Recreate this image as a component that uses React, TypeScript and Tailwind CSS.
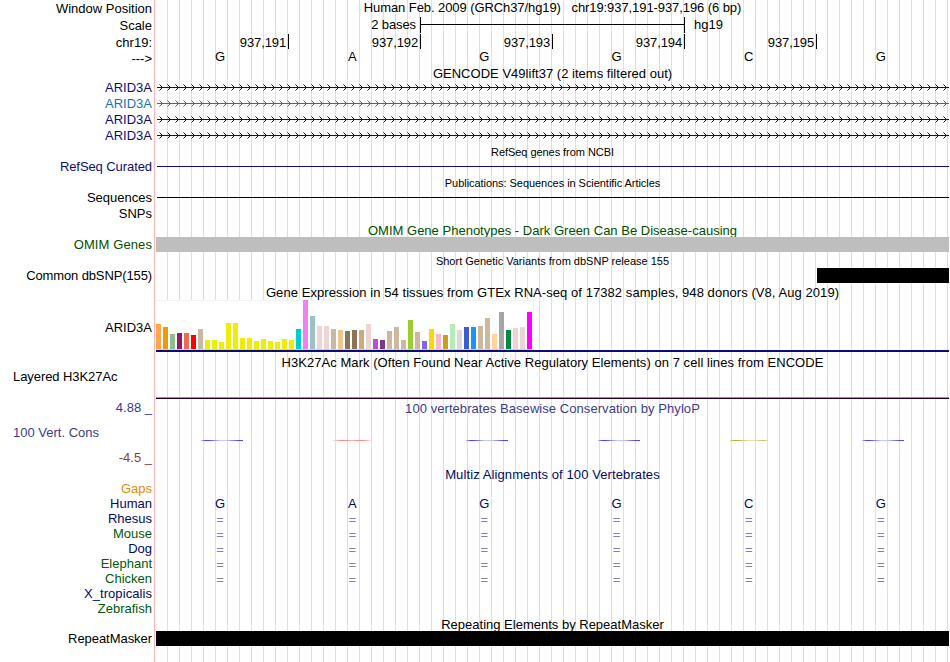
import type { ReactNode } from "react";
import clsx from "clsx";

const BASES = ["G", "A", "G", "G", "C", "G"];
const POSITIONS = ["937,191", "937,192", "937,193", "937,194", "937,195", ""];

const TRANSCRIPTS = [
  { id: 1, color: "#0c0c78" },
  { id: 2, color: "#1874b4" },
  { id: 3, color: "#0c0c78" },
  { id: 4, color: "#0c0c78" },
];

const SPECIES = [
  { name: "Rhesus", className: "text-[#000a64]", aligned: true },
  { name: "Mouse", className: "text-[#005a0a]", aligned: true },
  { name: "Dog", className: "text-[#000a64]", aligned: true },
  { name: "Elephant", className: "text-[#005a0a]", aligned: true },
  { name: "Chicken", className: "text-[#005a0a]", aligned: true },
  { name: "X_tropicalis", className: "text-[#000a64] tracking-[0.07px]", aligned: false },
  { name: "Zebrafish", className: "text-[#005a0a]", aligned: false },
];

// [color, height] for each GTEx tissue
const TISSUES: [string, number][] = [
  ["#ffa54f", 25], ["#ee9a00", 22], ["#8fbc8f", 15], ["#8b1c62", 16], ["#ee6a50", 16], ["#ff0000", 14],
  ["#cdb79e", 20], ["#eeee00", 9], ["#eeee00", 9], ["#eeee00", 7], ["#eeee00", 26], ["#eeee00", 26],
  ["#eeee00", 11], ["#eeee00", 11], ["#eeee00", 8], ["#eeee00", 10], ["#eeee00", 8], ["#eeee00", 7],
  ["#eeee00", 10], ["#eeee00", 9], ["#00cdcd", 20], ["#ee82ee", 49], ["#9ac0cd", 33], ["#eed5d2", 23],
  ["#eed5d2", 23], ["#cdb79e", 20], ["#eec591", 19], ["#8b7355", 18], ["#8b7355", 19], ["#cdaa7d", 19],
  ["#eed5d2", 25], ["#b452cd", 10], ["#7a378b", 9], ["#cdb79e", 18], ["#cdb79e", 22], ["#cdb79e", 9],
  ["#9acd32", 29], ["#cdb79e", 17], ["#7a67ee", 8], ["#ffd700", 20], ["#ffb6c1", 15], ["#cd9b1d", 14],
  ["#b4eeb4", 25], ["#d9d9d9", 19], ["#3a5fcd", 22], ["#1e90ff", 22], ["#cdb79e", 23], ["#cdb79e", 31],
  ["#ffd39b", 15], ["#a6a6a6", 37], ["#008b45", 19], ["#eed5d2", 21], ["#eed5d2", 22], ["#ff00ff", 37],
];

const BLUE_BAR = "w-[42px] bg-[linear-gradient(to_right,#c8c8ff,#4646ff_10%,#4646ff_18%,#c8c8ff_45%,#c8c8ff_60%,#4646ff_90%)]";
const RED_BAR = "w-[38px] bg-[linear-gradient(to_right,#ffe0e0,#ff8c8c_20%,#ff8c8c_35%,#ffb4b4_50%,#ff8c8c_65%,#ff8c8c_80%,#ffe0e0)]";
const OLIVE_BAR = "w-[38px] bg-[linear-gradient(to_right,#dcdc96,#b4b43c_10%,#b4b43c_20%,#e6e6b4_50%,#dcdc96_70%,#c0c050_88%,#e6e6b4)]";
const CONSERVATION = [BLUE_BAR, RED_BAR, BLUE_BAR, BLUE_BAR, OLIVE_BAR, BLUE_BAR];

function Row({
  height,
  label,
  labelClass,
  children,
}: {
  height: string;
  label?: ReactNode;
  labelClass?: string;
  children?: ReactNode;
}) {
  return (
    <div className={clsx("flex", height)}>
      <div className={clsx("w-[154px] shrink-0 whitespace-pre pr-[2px] text-right", labelClass)}>{label}</div>
      <div className="ml-[2px] w-[793px]">{children}</div>
    </div>
  );
}

function Title({ children, className }: { children: ReactNode; className?: string }) {
  return <div className={clsx("whitespace-pre text-center", className)}>{children}</div>;
}

function BaseColumns({ values, className }: { values: string[]; className?: string }) {
  return (
    <div className={clsx("grid grid-cols-6", className)}>
      {values.map((value, i) => (
        <div key={i} className="pr-1 text-center">
          {value}
        </div>
      ))}
    </div>
  );
}

function Transcript({ id, color }: { id: number; color: string }) {
  return (
    <svg width="793" height="16" className="block" shapeRendering="crispEdges">
      <defs>
        <pattern id={`strand-${id}`} x="3" y="0" width="8" height="16" patternUnits="userSpaceOnUse">
          <g fill={color}>
            <rect x="0" y="4" width="1" height="1" opacity="0.5" />
            <rect x="1" y="5" width="1" height="1" />
            <rect x="2" y="6" width="1" height="1" />
            <rect x="2" y="8" width="1" height="1" />
            <rect x="1" y="9" width="1" height="1" />
            <rect x="0" y="10" width="1" height="1" opacity="0.5" />
          </g>
        </pattern>
      </defs>
      <rect x="3" width="790" height="16" fill={`url(#strand-${id})`} />
      <rect x="1" y="7" width="792" height="1" fill={color} />
    </svg>
  );
}

export default function App() {
  return (
    <div className="h-[662px] w-[950px] overflow-hidden bg-white font-['Liberation_Sans',Arial,sans-serif] text-[13px] leading-4 text-black">
      <div className="flex h-full w-[949px] flex-col bg-[linear-gradient(#ffb4b4,#ffb4b4),repeating-linear-gradient(to_right,#dcdcfa_0_1px,transparent_1px_12px)] bg-[size:1px_100%,782px_100%] bg-[position:154px_0,167px_0] bg-no-repeat">
        <Row height="h-4" label="Window Position" labelClass="pt-px">
          <Title className="tracking-[-0.08px]">
            {"Human Feb. 2009 (GRCh37/hg19)   chr19:937,191-937,196 (6 bp)"}
          </Title>
        </Row>
        <Row height="h-[18px]" label="Scale" labelClass="pt-[2px]">
          <div className="flex pt-px">
            <div className="w-[260px] text-right tracking-[-0.1px]">2 bases</div>
            <div className="ml-1 flex h-4 w-[265px] items-center border-x border-black">
              <div className="-mt-px h-px w-full bg-black" />
            </div>
            <div className="ml-[9px]">hg19</div>
          </div>
        </Row>
        <Row height="h-4" label="chr19:" labelClass="pt-px">
          <div className="ml-px flex">
            {POSITIONS.map((pos, i) => (
              <div
                key={i}
                className={clsx(
                  "h-[15px] w-33 pr-[2px] pt-px text-right tracking-[-0.12px]",
                  pos && "border-r border-black"
                )}
              >
                {pos}
              </div>
            ))}
          </div>
        </Row>
        <Row height="h-4" label="--->" labelClass="pt-px">
          <BaseColumns values={BASES} className="-mt-px" />
        </Row>

        <Row height="h-[14px]">
          <Title className="tracking-[0.02px]">GENCODE V49lift37 (2 items filtered out)</Title>
        </Row>
        {TRANSCRIPTS.map((t) => (
          <Row
            key={t.id}
            height="h-4"
            label="ARID3A"
            labelClass={t.id === 2 ? "text-[#1874b4]" : "text-[#0c0c78]"}
          >
            <Transcript id={t.id} color={t.color} />
          </Row>
        ))}

        <Row height="h-[15px]">
          <Title className="text-[11px] tracking-[-0.05px]">RefSeq genes from NCBI</Title>
        </Row>
        <Row height="h-4" label="RefSeq Curated" labelClass="text-[#0c0c78] tracking-[-0.08px]">
          <div className="ml-px mt-[7px] h-px bg-[#0c0c78]" />
        </Row>
        <Row height="h-[15px]">
          <Title className="text-[11px] tracking-[-0.05px]">Publications: Sequences in Scientific Articles</Title>
        </Row>
        <Row height="h-4" label="Sequences">
          <div className="ml-px mt-[7px] h-px bg-black" />
        </Row>
        <Row height="h-4" label="SNPs" />

        <Row height="h-[15px]">
          <Title className="pt-px tracking-[0.01px] text-[#005000]">
            OMIM Gene Phenotypes - Dark Green Can Be Disease-causing
          </Title>
        </Row>
        <Row height="h-[15px]" label="OMIM Genes" labelClass="text-[#005000] tracking-[0.1px]">
          <div className="relative h-[15px] bg-[#bebebe]" />
        </Row>
        <Row height="h-4">
          <Title className="pt-px text-[11px]">Short Genetic Variants from dbSNP release 155</Title>
        </Row>
        <Row height="h-4" label="Common dbSNP(155)" labelClass="tracking-[-0.12px]">
          <div className="ml-auto h-[15px] w-33 bg-black" />
        </Row>

        <Row height="h-4">
          <Title className="pt-px tracking-[0.065px]">
            Gene Expression in 54 tissues from GTEx RNA-seq of 17382 samples, 948 donors (V8, Aug 2019)
          </Title>
        </Row>
        <Row height="h-[53px]" label="ARID3A" labelClass="pt-5">
          <div className="flex h-[50px] w-[378px] items-end gap-[2px] border-b border-[#d2d2c8] bg-white shadow-[inset_0_1px_#f2f2f2,inset_-1px_0_#f2f2f2]">
            {TISSUES.map(([color, height], i) => (
              <div key={i} className="w-[5px]" style={{ height, backgroundColor: color }} />
            ))}
          </div>
          <div className="h-[2px] bg-[#0c0c78]" />
        </Row>

        <Row height="h-[18px]">
          <Title className="pt-[2px] tracking-[0.05px]">
            H3K27Ac Mark (Often Found Near Active Regulatory Elements) on 7 cell lines from ENCODE
          </Title>
        </Row>
        <Row
          height="h-[29px]"
          label="Layered H3K27Ac"
          labelClass="pl-[13px] !text-left -mt-[2px] tracking-[-0.07px]"
        >
          <div className="mt-[26px] h-[2px] border-t border-[#ff6e46] bg-[#1e0028]" />
        </Row>

        <Row height="h-4" label="4.88 _" labelClass="text-[#3c3c8c]">
          <Title className="pt-px tracking-[0.06px] text-[#3c3c8c]">
            100 vertebrates Basewise Conservation by PhyloP
          </Title>
        </Row>
        <Row height="h-[34px]" label="100 Vert. Cons" labelClass="pl-[13px] !text-left pt-[9px] text-[#3c3c8c]">
          <div className="grid grid-cols-6 pt-6">
            {CONSERVATION.map((bar, i) => (
              <div key={i} className="pl-[45.3px]">
                <div className={clsx("h-px", bar)} />
              </div>
            ))}
          </div>
        </Row>
        <Row height="h-4" label="-4.5 _" labelClass="text-[#8c3c3c]" />

        <Row height="h-4">
          <Title className="pt-px tracking-[0.1px] text-[#000a64]">Multiz Alignments of 100 Vertebrates</Title>
        </Row>
        <Row height="h-[14px]" label="Gaps" labelClass="text-[#e68a00] -mt-px" />
        <Row height="h-[15px]" label="Human" labelClass="text-[#000a64]">
          <BaseColumns values={BASES} className="text-[#000a64]" />
        </Row>
        {SPECIES.map((s) => (
          <Row key={s.name} height="h-[15px]" label={s.name} labelClass={s.className}>
            {s.aligned && <BaseColumns values={BASES.map(() => "=")} className="pt-px text-[#8080b4]" />}
          </Row>
        ))}

        <Row height="h-[15px]">
          <Title className="pt-px">Repeating Elements by RepeatMasker</Title>
        </Row>
        <Row height="h-4" label="RepeatMasker" labelClass="tracking-[-0.05px]">
          <div className="relative h-[15px] bg-black" />
        </Row>
      </div>
    </div>
  );
}
